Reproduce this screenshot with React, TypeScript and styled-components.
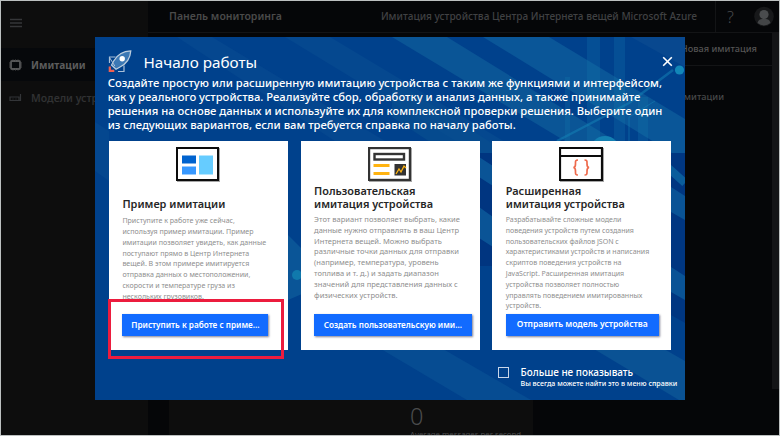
import React from 'react';
import styled, { createGlobalStyle } from 'styled-components';

const Global = createGlobalStyle`
  * { box-sizing: border-box; }
  body { margin: 0; background: #050608; font-family: "Noto Sans", "Open Sans", sans-serif; }
`;

const Page = styled.div`
  position: relative;
  display: flex;
  width: 780px;
  height: 436px;
  overflow: hidden;
  border: 1px solid #bcc0c0;
  background: #050608;
`;

const Sidebar = styled.nav`
  display: flex;
  flex-direction: column;
  width: 147px;
  background: #0d0d0d;
`;

const MenuButton = styled.div`
  height: 47px;
  padding: 10px 0 0 9px;
`;

const NavItem = styled.div<{ $active?: boolean }>`
  display: flex;
  align-items: center;
  height: 33px;
  padding-left: 8px;
  gap: 9px;
  white-space: nowrap;
  font-size: ${p => (p.$active ? 10.1 : 10.5)}px;
  font-weight: ${p => (p.$active ? 700 : 600)};
  color: ${p => (p.$active ? '#5c5c5c' : '#303132')};
  background: ${p => (p.$active ? '#06080b' : 'transparent')};
  svg { flex: none; }
`;

const Main = styled.main`
  display: flex;
  flex-direction: column;
  flex: 1;
  min-width: 0;
`;

const TopBar = styled.header`
  display: flex;
  align-items: center;
  height: 32px;
  padding-left: 21px;
  border-bottom: 1px solid #131416;
  white-space: nowrap;
`;

const TopTitle = styled.div`
  flex: 1;
  font-size: 10.5px;
  font-weight: 600;
  line-height: 28px;
  padding-bottom: 2px;
  color: #4a4a4a;
`;

const AppName = styled.div`
  padding: 0 18px 1px 0;
  font-size: 10.05px;
  font-weight: 500;
  color: #404143;
`;

const Account = styled.div`
  display: flex;
  align-items: center;
  justify-content: space-between;
  width: 64px;
  height: 31px;
  padding: 0 5px 0 11px;
  border-left: 1px solid #131416;
  font-size: 16px;
  font-weight: 300;
  line-height: 28px;
  color: #4a4a4c;
`;

const Body = styled.div`
  display: flex;
  flex: 1;
  min-height: 0;
`;

const Content = styled.div`
  display: flex;
  flex-direction: column;
  flex: 1;
  min-width: 0;
`;

const Scrollbar = styled.div`
  width: 7px;
  height: 356px;
  background: #131416;
`;

const Command = styled.div`
  height: 33px;
  padding-right: 15px;
  border-bottom: 1px solid #131416;
  text-align: right;
  line-height: 31px;
  font-size: 9.2px;
  font-weight: 500;
  color: #545454;
`;

const Hint = styled.div`
  flex: 1;
  padding: 24px 48px 0 0;
  text-align: right;
  font-size: 9.2px;
  font-weight: 500;
  color: #48494a;
`;

const Metric = styled.section`
  width: 364px;
  height: 40px;
  margin-left: 21px;
  padding-left: 241px;
  overflow: hidden;
  background: #0d0d0d;
  color: #4a4b4c;
  white-space: nowrap;
`;

const MetricValue = styled.div`
  padding-top: 7px;
  font-size: 23.5px;
  font-weight: 300;
  line-height: 29px;
`;

const MetricLabel = styled.div`
  margin-top: -3px;
  font-size: 7.8px;
  line-height: 12px;
`;

const Dialog = styled.section`
  position: absolute;
  left: 94px;
  top: 36px;
  width: 590px;
  height: 363px;
  overflow: hidden;
  background: #00418c;
  color: #fff;
`;

const Backdrop = styled.svg`
  position: absolute;
  inset: 0;
`;

const DialogInner = styled.div`
  position: relative;
  display: flex;
  flex-direction: column;
  height: 100%;
`;

const DialogHead = styled.div`
  display: flex;
  align-items: flex-start;
  height: 39px;
  padding: 13px 12.5px 0 13px;
`;

const DialogTitle = styled.h1`
  flex: 1;
  margin: 2px 0 0 11.5px;
  font-size: 15.25px;
  font-weight: 400;
  line-height: 20px;
`;

const CloseIcon = styled.svg`
  margin-top: 6px;
`;

const Intro = styled.p`
  height: 65px;
  margin: 0 0 0 12.7px;
  font-size: 11.24px;
  font-weight: 500;
  line-height: 14px;
  white-space: pre;
`;

const Cards = styled.div`
  display: grid;
  grid-template-columns: repeat(3, 179px);
  gap: 12.7px;
  padding-left: 14px;
`;

const Card = styled.article`
  display: flex;
  flex-direction: column;
  height: 208.5px;
  padding: 5.5px 0 0 13.4px;
  background: #fff;
`;

const CardIcon = styled.svg`
  flex: none;
  margin-left: 53.5px;
  filter: drop-shadow(1px 1px 0.6px rgba(0, 0, 0, 0.35));
`;

const CardTitle = styled.h2`
  display: flex;
  align-items: flex-end;
  height: 26px;
  margin: 3.8px 0 0;
  color: #262626;
  font-size: 10.92px;
  font-weight: 600;
  line-height: 13px;
  white-space: pre;
`;

const CardText = styled.p<{ $size: number; $top: number }>`
  height: ${p => 103.8 - p.$top}px;
  margin: ${p => p.$top}px 0 0;
  color: #8e8e8e;
  font-size: ${p => p.$size}px;
  line-height: 10.8px;
  white-space: pre;
`;

const Button = styled.button<{ $width: number; $size: number }>`
  width: ${p => p.$width}px;
  height: 21.5px;
  padding: 0;
  border: 0;
  background: #126bff;
  box-shadow: 1px 1px 2px rgba(0, 0, 40, 0.5);
  color: #fff;
  font-family: inherit;
  font-size: ${p => p.$size}px;
  font-weight: 600;
  line-height: 21px;
  white-space: nowrap;
`;

const Highlight = styled.div`
  position: absolute;
  left: 13px;
  top: 262px;
  width: 176px;
  height: 60px;
  border: 3px solid #ec1c3e;
`;

const Footer = styled.label`
  display: flex;
  gap: 11.5px;
  padding: 17px 0 0 403px;
`;

const Checkbox = styled.span`
  width: 11px;
  height: 11px;
  border: 1px solid #c9d6ea;
`;

const FooterText = styled.span`
  font-size: 9.95px;
  font-weight: 500;
  line-height: 11px;
`;

const FooterNote = styled.span`
  display: block;
  font-size: 7.08px;
  line-height: 10px;
`;

const simpleText = `Приступите к работе уже сейчас,
используя пример имитации. Пример
имитации позволяет увидеть, как данные
поступают прямо в Центр Интернета
вещей. В этом примере имитируется
отправка данных о местоположении,
скорости и температуре груза из
нескольких грузовиков.`;

const customText = `Этот вариант позволяет выбрать, какие
данные нужно отправлять в ваш Центр
Интернета вещей. Можно выбрать
различные точки данных для отправки
(например, температура, уровень
топлива и т. д.) и задать диапазон
значений для представления данных с
физических устройств.`;

const advancedText = `Разрабатывайте сложные модели
поведения устройств путем создания
пользовательских файлов JSON с
характеристиками устройств и написания
скриптов поведения устройств на
JavaScript. Расширенная имитация
устройства позволяет полностью
управлять поведением имитированных
устройств.`;

const introText = `Создайте простую или расширенную имитацию устройства с таким же функциями и интерфейсом,
как у реального устройства. Реализуйте сбор, обработку и анализ данных, а также принимайте
решения на основе данных и используйте их для комплексной проверки решения. Выберите один
из следующих вариантов, если вам требуется справка по началу работы.`;

const CircuitArt = () => (
  <Backdrop width="590" height="363" viewBox="0 0 590 363">
    <path d="M82 0h35L400 170h-60z" fill="#05478f" />
    <path d="M190 0h45L520 171v30z" fill="#05488f" />
    <path d="M0 85L14 94v50L0 134z" fill="#04478f" />
    <path d="M193 198l14 14v45l-14 6z" fill="#0a5597" />
    <path d="M297 0h55L540 116H490z" fill="#0a5596" />
    <path d="M352 116h60L297 42v38z" fill="#08508f" opacity="0.6" />
    <path d="M388 0h66L590 82v42z" fill="#0a5698" />
    <path d="M536 0h54v30z" fill="#08488f" />
    <path d="M384 116h14v113h-14z" fill="#003580" />
    <path d="M384 120l14 9v20l-14-9zM384 170l14 10v30l-14-9z" fill="#0a5496" />
    <path d="M576 116h14v170l-14-8z" fill="#003681" />
    <path d="M576 150l14 9v24l-14-8zM576 230l14 9v24l-14-8z" fill="#095396" />
    <g fill="#1476ad" opacity="0.28">
      <path d="M492 0h13v104h-13zM519 0h11v104h-11zM470 40h5v64h-5z" />
      <path d="M543 60h10v44h-10z" />
    </g>
    <g fill="none" stroke="#1585b8" opacity="0.5">
      <path d="M462 104l46-24 26-14 44-33" strokeWidth="2.5" />
      <path d="M534 104V80l26-16" strokeWidth="1" />
      <path d="M570 128l20 18" strokeWidth="8" />
    </g>
    <circle cx="584.5" cy="33" r="4.6" fill="#1287b8" />
    <circle cx="510" cy="114" r="15" fill="#1480b2" />
    <circle cx="202" cy="238" r="5" fill="#1079ac" />
    <path d="M286 312h62l88 51h-64z" fill="#064c92" />
    <path d="M499 312h70l21 12v39h-6z" fill="#0a5294" />
  </Backdrop>
);

const Rocket = () => (
  <svg width="24" height="23" viewBox="0 0 24 23">
    <path d="M1.500 13V7h6M10 21.500h6v-6" fill="none" stroke="#a9bfd8" strokeWidth="1.200" />
    <path d="M22.800.9C15 1.200 9.500 4.200 5.500 11.200L3.500 15l4.500 4.200 4-2.200C19 13.500 22.300 8 22.800.9z" fill="#3c78b4" stroke="#bccddd" strokeWidth="1.200" />
    <path d="M1.800 8l5 8" stroke="#a9bfd8" />
    <circle cx="14.200" cy="8.800" r="2.700" fill="#fff" />
    <path d="M1.800 16.500v4.300h4.500" fill="none" stroke="#f06050" strokeWidth="2.200" />
  </svg>
);

export default function App() {
  return (
    <>
      <Global />
      <Page>
        <Sidebar>
          <MenuButton>
            <svg width="12" height="10" viewBox="0 0 12 10">
              <path d="M0 1.500h12M0 5h12M0 8.500h12" stroke="#353638" strokeWidth="1.300" />
            </svg>
          </MenuButton>
          <NavItem $active>
            <svg width="13" height="12" viewBox="0 0 13 12">
              <rect x="2" y="2" width="9" height="8" rx="1" fill="none" stroke="#58595a" strokeWidth="1.800" />
              <path d="M0 4h2M0 6h2M0 8h2M11 4h2M11 6h2M11 8h2M4 .5v2M6.500.5v2M9 .5v2M4 9.500v2M6.500 9.500v2M9 9.500v2" stroke="#4c4d4e" />
            </svg>
            Имитации
          </NavItem>
          <NavItem>
            <svg width="13" height="10" viewBox="0 0 13 10">
              <path d="M1 4h9v3.500H1zM11.500 1v6.500H10M3.500 6h1M6.500 6h1" fill="none" stroke="#333538" strokeWidth="1.200" />
            </svg>
            Модели устройств
          </NavItem>
        </Sidebar>
        <Main>
          <TopBar>
            <TopTitle>Панель мониторинга</TopTitle>
            <AppName>Имитация устройства Центра Интернета вещей Microsoft Azure</AppName>
            <Account>
              ?
              <svg width="20" height="21" viewBox="0 0 20 21">
                <circle cx="10" cy="10.500" r="9.800" fill="#17181a" />
                <circle cx="10" cy="8.500" r="4.600" fill="#4a4c4e" />
                <path d="M3.500 17c1-4 3.500-4 6.500-4s5.500 0 6.500 4a9.800 9.800 0 0 1-13 0z" fill="#434547" />
              </svg>
            </Account>
          </TopBar>
          <Body>
            <Content>
              <Command>Новая имитация</Command>
              <Hint>имитации</Hint>
              <Metric>
                <MetricValue>0</MetricValue>
                <MetricLabel>Average messages per second</MetricLabel>
              </Metric>
            </Content>
            <Scrollbar />
          </Body>
        </Main>
        <Dialog>
          <CircuitArt />
          <DialogInner>
            <DialogHead>
              <Rocket />
              <DialogTitle>Начало работы</DialogTitle>
              <CloseIcon width="11" height="11" viewBox="0 0 11 11">
                <path d="M1.200 1.200l8.600 8.600M9.800 1.200L1.200 9.800" stroke="#fff" strokeWidth="1.600" />
              </CloseIcon>
            </DialogHead>
            <Intro>{introText}</Intro>
            <Cards>
              <Card>
                <CardIcon width="43" height="34" viewBox="0 0 43 34">
                  <rect x="1" y="1" width="41" height="32" fill="#fff" stroke="#0c0c0c" strokeWidth="2" />
                  <path d="M6 8.500h14v8H6z" fill="#0063cf" />
                  <path d="M6 19.500h14v8H6z" fill="#3798ff" />
                  <path d="M23 8.500h14v19H23z" fill="#66ccff" />
                </CardIcon>
                <CardTitle>Пример имитации</CardTitle>
                <CardText $size={7.07} $top={5}>{simpleText}</CardText>
                <Button $width={146} $size={8.2}>Приступить к работе с приме...</Button>
              </Card>
              <Card>
                <CardIcon width="43" height="34" viewBox="0 0 43 34">
                  <rect x="1" y="1" width="41" height="32" fill="#fff" stroke="#333" strokeWidth="2.400" />
                  <rect x="6.500" y="7" width="29.500" height="5.500" fill="#fff" stroke="#333" strokeWidth="2.400" />
                  <path d="M5.500 18.500h16M5.500 26.500h16" stroke="#ffb310" strokeWidth="3" />
                  <path d="M26.500 17h11.500v11.500H26.500z" fill="#333" />
                  <path d="M28 27l3-5 2 3 3-6 2 2" fill="none" stroke="#ffb310" strokeWidth="1.300" />
                </CardIcon>
                <CardTitle>{'Пользовательская\nимитация устройства'}</CardTitle>
                <CardText $size={7.56} $top={3.7}>{customText}</CardText>
                <Button $width={157.5} $size={8.2}>Создать пользовательскую ими...</Button>
              </Card>
              <Card>
                <CardIcon width="44" height="34" viewBox="0 0 44 34">
                  <path d="M1 1h42v32H1zM1 9h42" fill="#fff" stroke="#0c0c0c" strokeWidth="2.200" />
                  <path d="M19 13c-3 0-2.500 2-2.500 4s0 3.500-2.200 3.500c2.200 0 2.200 1.500 2.200 3.500s-.5 4 2.500 4M25.500 13c3 0 2.500 2 2.500 4s0 3.500 2.200 3.500c-2.200 0-2.200 1.500-2.200 3.500s.5 4-2.500 4" fill="none" stroke="#ee6a4c" strokeWidth="1.700" />
                </CardIcon>
                <CardTitle>{'Расширенная\nимитация устройства'}</CardTitle>
                <CardText $size={7.03} $top={3.7}>{advancedText}</CardText>
                <Button $width={153} $size={8.57}>Отправить модель устройства</Button>
              </Card>
            </Cards>
            <Footer>
              <Checkbox />
              <FooterText>
                Больше не показывать
                <FooterNote>Вы всегда можете найти это в меню справки</FooterNote>
              </FooterText>
            </Footer>
          </DialogInner>
          <Highlight />
        </Dialog>
      </Page>
    </>
  );
}
